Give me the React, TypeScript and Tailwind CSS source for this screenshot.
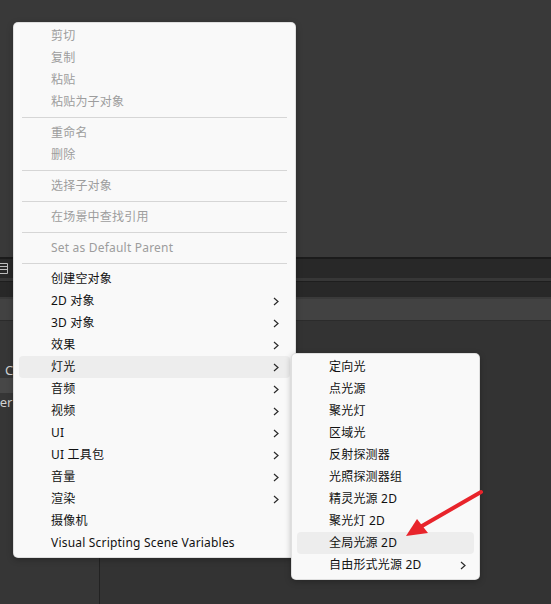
import React from "react";

type Entry =
  | { label: string; disabled?: boolean; sub?: boolean; active?: boolean }
  | "sep";

const mainItems: Entry[] = [
  { label: "剪切", disabled: true },
  { label: "复制", disabled: true },
  { label: "粘贴", disabled: true },
  { label: "粘贴为子对象", disabled: true },
  "sep",
  { label: "重命名", disabled: true },
  { label: "删除", disabled: true },
  "sep",
  { label: "选择子对象", disabled: true },
  "sep",
  { label: "在场景中查找引用", disabled: true },
  "sep",
  { label: "Set as Default Parent", disabled: true },
  "sep",
  { label: "创建空对象" },
  { label: "2D 对象", sub: true },
  { label: "3D 对象", sub: true },
  { label: "效果", sub: true },
  { label: "灯光", sub: true, active: true },
  { label: "音频", sub: true },
  { label: "视频", sub: true },
  { label: "UI", sub: true },
  { label: "UI 工具包", sub: true },
  { label: "音量", sub: true },
  { label: "渲染", sub: true },
  { label: "摄像机" },
  { label: "Visual Scripting Scene Variables" },
];

const lightItems: Entry[] = [
  { label: "定向光" },
  { label: "点光源" },
  { label: "聚光灯" },
  { label: "区域光" },
  { label: "反射探测器" },
  { label: "光照探测器组" },
  { label: "精灵光源 2D" },
  { label: "聚光灯 2D" },
  { label: "全局光源 2D", active: true },
  { label: "自由形式光源 2D", sub: true },
];

function Chevron() {
  return (
    <svg width="6" height="9" viewBox="0 0 6 9" className="shrink-0">
      <path d="M1 1 L5 4.5 L1 8" fill="none" stroke="#2a2a2a" strokeWidth="1.2" />
    </svg>
  );
}

function Menu({ items, chevronPad }: { items: Entry[]; chevronPad: string }) {
  return (
    <div className="flex flex-col pt-[2px] pb-[3px]">
      {items.map((it, i) =>
        it === "sep" ? (
          <div key={i} className="py-[4px] px-[8px]">
            <div className="h-px bg-[#d6d6d6]" />
          </div>
        ) : (
          <div
            key={i}
            className={
              "mx-[5px] h-[22px] flex items-center rounded-[4px] pl-[32px] " +
              chevronPad +
              (it.active ? " bg-[#ededed]" : "")
            }
          >
            <span
              className={
                "flex-1 text-[12px] leading-none whitespace-nowrap tracking-[0.2px] " +
                (it.disabled ? "text-[#9d9d9d]" : "text-[#111111]")
              }
            >
              {it.label}
            </span>
            {it.sub && <Chevron />}
          </div>
        )
      )}
    </div>
  );
}

export default function App() {
  return (
    <div
      className="relative w-[551px] h-[604px] overflow-hidden bg-[#393939] flex flex-col"
      style={{ fontFamily: '"Noto Sans", "Noto Sans CJK SC", sans-serif' }}
    >
      {/* editor background */}
      <div className="h-[257px] shrink-0" />
      <div className="h-[2px] bg-[#1b1b1b] shrink-0" />
      <div className="h-[19px] bg-[#282828] shrink-0 flex items-center">
        <svg width="9" height="11" viewBox="0 0 9 11" className="ml-[-1px]">
          <path d="M0 0.5 H8.5 V10.5 H0 M0 3.5 H8 M0 6.5 H8" fill="none" stroke="#bdbdbd" strokeWidth="1" />
        </svg>
      </div>
      <div className="h-[3px] bg-[#373737] shrink-0" />
      <div className="h-px bg-[#1e1e1e] shrink-0" />
      <div className="h-[15px] bg-[#282828] shrink-0" />
      <div className="h-[2px] bg-[#3a3a3a] shrink-0" />
      <div className="h-[21px] bg-[#424242] shrink-0" />
      <div className="h-px bg-[#2b2b2b] shrink-0" />
      <div className="flex-1 flex">
        <div className="w-[100px] bg-[#363636] border-r border-[#222222] flex flex-col text-[13px] text-[#d2d2d2]">
          <div className="h-[42px]" />
          <div className="h-[15px] flex items-center pl-[5px] leading-none">C</div>
          <div className="h-[15px] bg-[#474747]" />
          <div className="h-[18px] flex items-center ml-[-5px] leading-none">ter</div>
        </div>
        <div className="flex-1 bg-[#333333]" />
      </div>

      {/* context menu */}
      <div className="absolute left-[13px] top-[22px] w-[283px] bg-[#f9f9f9] rounded-[5px] border border-black/10 shadow-[0_2px_6px_rgba(0,0,0,0.25)]">
        <Menu items={mainItems} chevronPad="pr-[11px]" />
      </div>

      {/* lights submenu */}
      <div className="absolute left-[291px] top-[353px] w-[189px] bg-[#f9f9f9] rounded-[5px] border border-black/10 shadow-[0_2px_6px_rgba(0,0,0,0.25)]">
        <Menu items={lightItems} chevronPad="pr-[8px]" />
      </div>

      {/* annotation arrow */}
      <svg className="absolute left-[400px] top-[485px]" width="90" height="60" viewBox="0 0 90 60">
        <line x1="81" y1="7" x2="22" y2="41" stroke="#e8242b" strokeWidth="4" strokeLinecap="round" />
        <polygon points="6,51 17,34 28,48" fill="#e8242b" />
      </svg>
    </div>
  );
}
